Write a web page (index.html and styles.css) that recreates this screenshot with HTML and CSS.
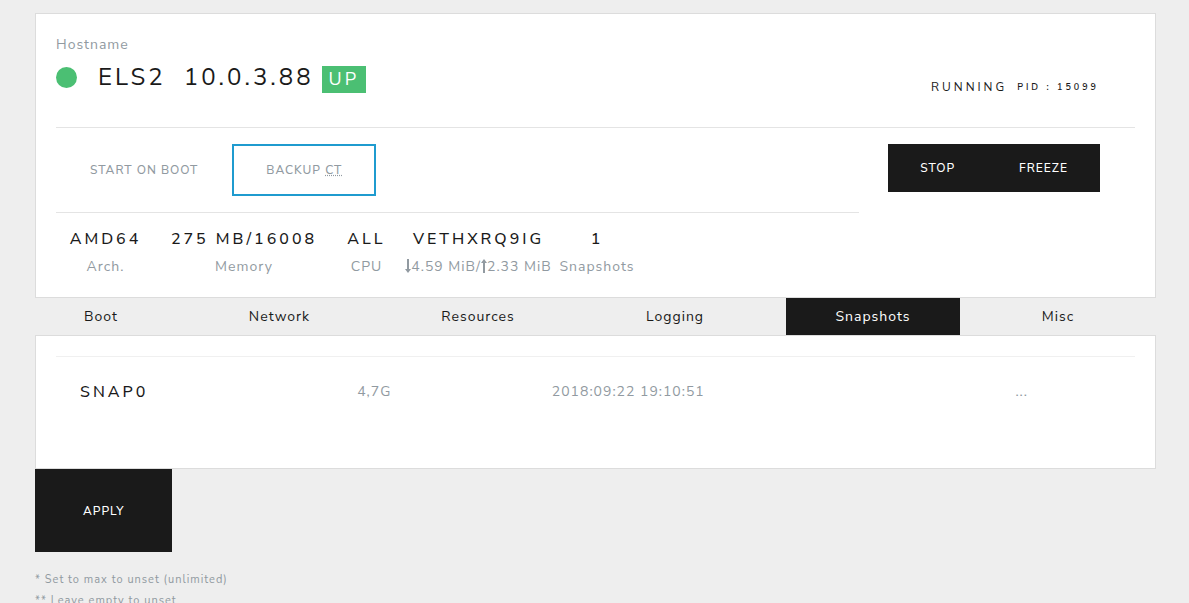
FILE: index.html
```
<!DOCTYPE html>
<html lang="en">
<head>
<meta charset="utf-8">
<title>ELS2 container</title>
<link rel="stylesheet" href="styles.css">
</head>
<body>
<main class="page">
  <section class="panel host">
    <header class="host-head">
      <div class="host-id">
        <div class="caption">Hostname</div>
        <h1 class="host-title">
          <span class="status-dot"></span>
          <span class="host-name">ELS2</span>
          <span class="host-ip">10.0.3.88</span>
          <span class="badge">UP</span>
        </h1>
      </div>
      <div class="state"><span class="state-name">RUNNING</span><span class="state-pid">PID : 15099</span></div>
    </header>
    <div class="host-body">
      <div class="host-main">
        <div class="actions">
          <button class="btn btn-plain" type="button">START ON BOOT</button>
          <button class="btn btn-outline" type="button">BACKUP <abbr title="Container">CT</abbr></button>
        </div>
        <dl class="stats">
          <div class="stat"><dd>AMD64</dd><dt>Arch.</dt></div>
          <div class="stat"><dd>275 MB/16008</dd><dt>Memory</dt></div>
          <div class="stat"><dd>ALL</dd><dt>CPU</dt></div>
          <div class="stat"><dd>VETHXRQ9IG</dd><dt><svg class="arrow" viewBox="0 0 6 14"><path class="shaft" d="M3 0V11"/><path d="M0 10H6L3 14Z"/></svg>4.59 MiB/<svg class="arrow" viewBox="0 0 6 14"><path class="shaft" d="M3 14V3"/><path d="M0 4H6L3 0Z"/></svg>2.33 MiB</dt></div>
          <div class="stat"><dd>1</dd><dt>Snapshots</dt></div>
        </dl>
      </div>
      <div class="power">
        <button class="btn btn-dark" type="button">STOP</button><button class="btn btn-dark" type="button">FREEZE</button>
      </div>
    </div>
  </section>

  <nav class="tabs">
    <a class="tab" href="#boot">Boot</a>
    <a class="tab" href="#network">Network</a>
    <a class="tab" href="#resources">Resources</a>
    <a class="tab" href="#logging">Logging</a>
    <a class="tab tab-active" href="#snapshots">Snapshots</a>
    <a class="tab" href="#misc">Misc</a>
  </nav>

  <section class="panel snapshots">
    <table class="snap-table">
      <tbody>
        <tr>
          <th class="snap-name" scope="row">SNAP0</th>
          <td class="snap-size">4,7G</td>
          <td class="snap-date">2018:09:22 19:10:51</td>
          <td class="snap-more">...</td>
        </tr>
      </tbody>
    </table>
  </section>

  <button class="btn btn-dark btn-apply" type="submit">APPLY</button>

  <footer class="notes">
    <p>* Set to max to unset (unlimited)</p>
    <p>** Leave empty to unset</p>
  </footer>
</main>
</body>
</html>
```
FILE: styles.css
```
* { box-sizing: border-box; }
html { scrollbar-width: none; }
body {
  margin: 0;
  background: #eee;
  color: #1a1a1a;
  font: 14px/20px "Nunito Sans", Nunito, Lato, sans-serif;
  letter-spacing: 1px;
}
.page { padding: 13px 33px 0 35px; }
.panel { background: #fff; border: 1px solid #dcdcdc; padding: 0 20px; }

.host { padding-bottom: 20px; }
.host-head {
  display: flex;
  justify-content: space-between;
  align-items: flex-end;
  padding: 21px 36px 30px 0;
  min-height: 114px;
  border-bottom: 1px solid #e4e4e4;
}
.host-id { align-self: flex-start; }
.caption { color: #919aa1; }
.host-title {
  display: flex;
  align-items: center;
  margin: 6px 0 0;
  font-size: 24px;
  line-height: 28px;
  font-weight: 400;
  letter-spacing: 3px;
}
.status-dot { width: 21px; height: 21px; border-radius: 50%; background: #4bbf73; margin-right: 21px; }
.host-ip { margin: 0 8px 0 18px; }
.badge {
  padding: 0 7px;
  margin-top: 5px;
  background: #4bbf73;
  color: #fff;
  font-size: 18px;
  line-height: 27px;
}
.state { display: flex; align-items: center; gap: 10px; }
.state-name { font-size: 12px; letter-spacing: 3px; }
.state-pid { font-size: 9px; font-weight: 600; letter-spacing: 3px; }

.host-body { display: flex; justify-content: space-between; align-items: flex-start; padding-top: 16px; }
.host-main { width: 74.4%; }
.actions { display: flex; padding-bottom: 16px; border-bottom: 1px solid #e4e4e4; }
.btn {
  border: 2px solid transparent;
  padding: 0 32px;
  margin: 0;
  font: inherit;
  font-size: 12px;
  font-weight: 500;
  line-height: 48px;
  letter-spacing: 1px;
  background: none;
  white-space: nowrap;
}
.btn-plain, .btn-outline { color: #919aa1; }
.btn-outline { border-color: #1f9bcf; }
.btn-dark { background: #1a1a1a; color: #fff; border: 0; }
.btn-apply { display: block; padding: 1px 48px 0; line-height: 82px; }
abbr { text-decoration: underline dotted; }
.power { display: flex; margin-right: 35px; }

.stats { display: grid; grid-template-columns: 99px 178px 67px 157px 80px; margin: 15px 0 0; }
.stat { display: flex; flex-direction: column; align-items: center; white-space: nowrap; }
.stat dd { margin: 0; font-size: 16px; font-weight: 500; line-height: 22px; letter-spacing: 3px; }
.stat dt { margin-top: 7px; color: #919aa1; }
.arrow { width: 6px; height: 14px; vertical-align: -2px; fill: #919aa1; }
.shaft { stroke: #919aa1; stroke-width: 2; }

.tabs { display: grid; grid-template-columns: 132fr 225fr 172fr 222fr 174fr 196fr; }
.tab { color: #1a1a1a; text-align: center; text-decoration: none; line-height: 37px; }
.tab-active { background: #1a1a1a; color: #fff; }

.snapshots { padding-top: 20px; padding-bottom: 65px; }
.snap-table { width: 100%; table-layout: fixed; border-collapse: collapse; border-top: 1px solid #f0f0f0; }
.snap-table th, .snap-table td { padding: 24px 0 0; line-height: 22px; font-weight: 400; text-align: center; color: #919aa1; }
.snap-table .snap-name { width: 20%; padding-left: 24px; text-align: left; font-size: 16px; font-weight: 500; letter-spacing: 3px; color: #1a1a1a; }
.snap-size { width: 19%; }
.snap-table .snap-date { width: 40%; text-align: left; padding-left: 75px; }

.notes { margin-top: 17px; font-size: 11px; line-height: 21px; color: #919aa1; }
.notes p { margin: 0; }
```
